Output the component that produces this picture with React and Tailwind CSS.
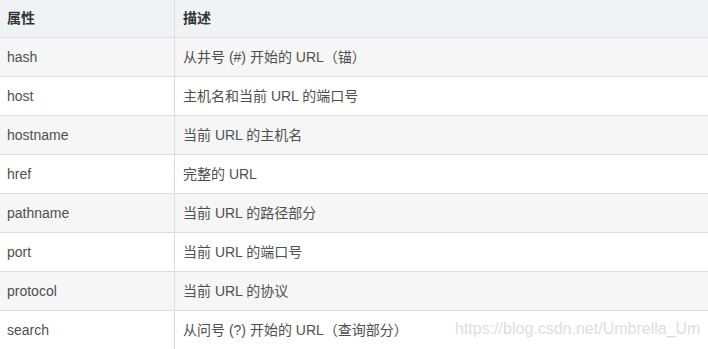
import React from 'react';

const rows = [
  ['hash', '从井号 (#) 开始的 URL（锚）'],
  ['host', '主机名和当前 URL 的端口号'],
  ['hostname', '当前 URL 的主机名'],
  ['href', '完整的 URL'],
  ['pathname', '当前 URL 的路径部分'],
  ['port', '当前 URL 的端口号'],
  ['protocol', '当前 URL 的协议'],
  ['search', '从问号 (?) 开始的 URL（查询部分）'],
];

const font = { fontFamily: '"Liberation Sans", "Noto Sans CJK SC", sans-serif' };

export default function App() {
  return (
    <div className="relative w-[708px] h-[349px] overflow-hidden bg-white text-[14px] text-[#4f4f4f]" style={font}>
      <div className="flex h-[38px] bg-[#eff3f5] border-b border-[#dddddd] font-bold text-[#333]">
        <div className="w-[175px] pl-[7px] border-r border-[#dddddd] flex items-center">属性</div>
        <div className="flex-1 pl-[8px] flex items-center">描述</div>
      </div>
      {rows.map(([k, v], i) => (
        <div
          key={k}
          className={`flex h-[39px] border-b border-[#dddddd] ${i % 2 === 0 ? 'bg-[#f6f6f6]' : 'bg-white'}`}
        >
          <div className="w-[175px] pl-[7px] border-r border-[#dddddd] flex items-center">{k}</div>
          <div className="flex-1 pl-[8px] flex items-center">{v}</div>
        </div>
      ))}
      <div className="absolute left-[455px] top-[321px] text-[16px] text-[#dedede] leading-none">
        https://blog.csdn.net/Umbrella_Um
      </div>
    </div>
  );
}
